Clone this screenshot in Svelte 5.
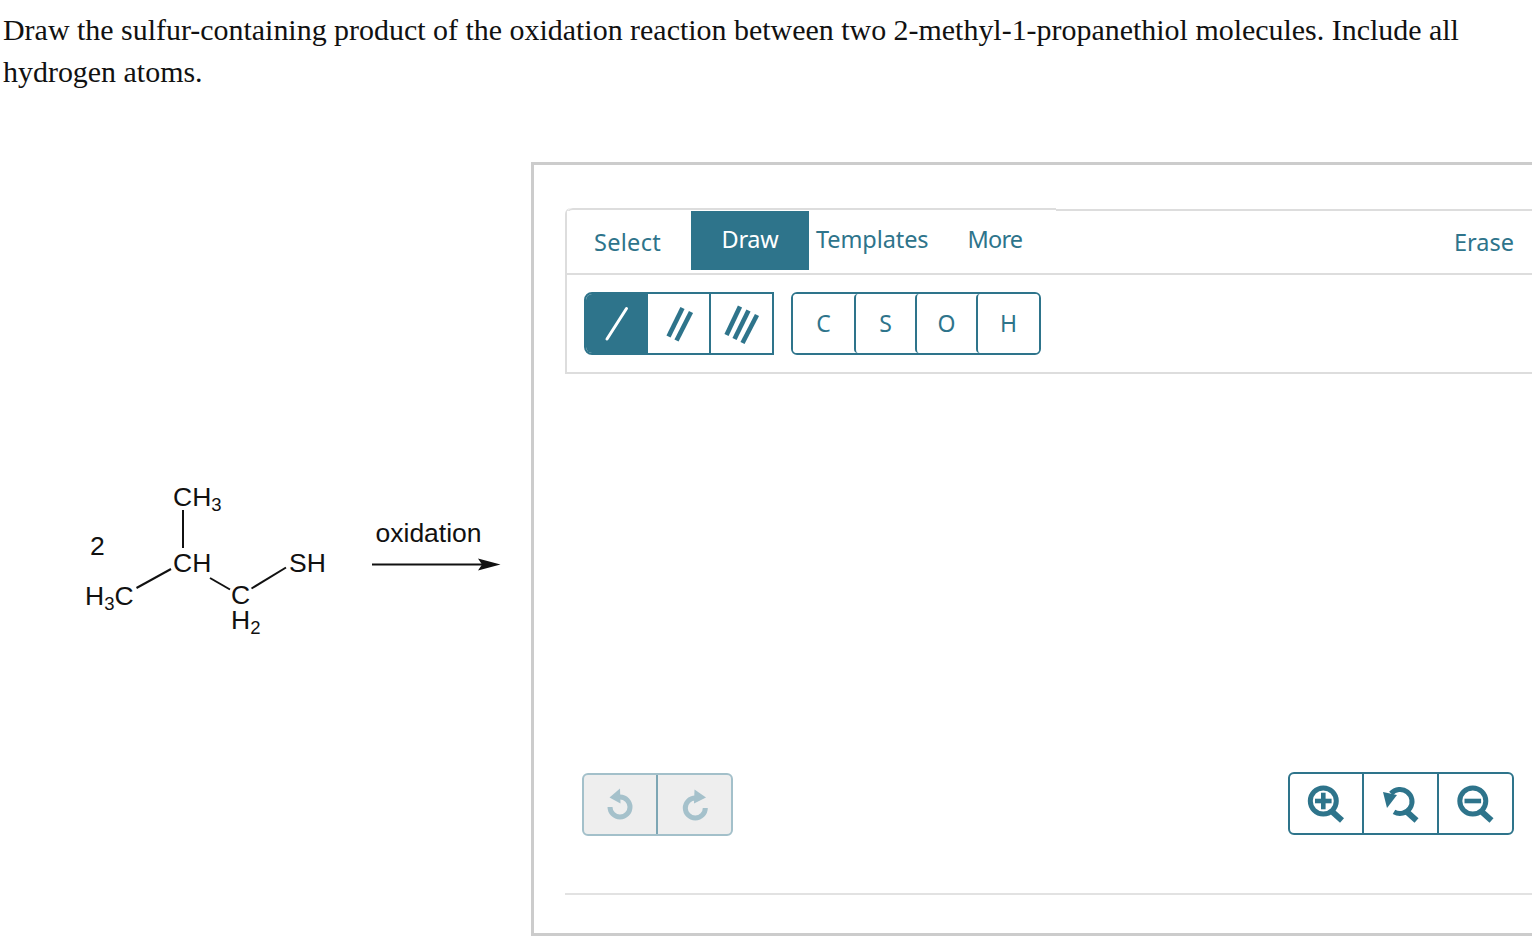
<script lang="ts">
  const bonds = ['single', 'double', 'triple']
  const atoms = ['C', 'S', 'O', 'H']
</script>

<main class="page">
  <p class="question">Draw the sulfur-containing product of the oxidation reaction between two 2-methyl-1-propanethiol molecules. Include all hydrogen atoms.</p>

  <div class="row">
    <svg class="reaction" viewBox="0 162 531 774" width="531" height="774">
      <g class="lines">
        <line x1="183" y1="510" x2="183" y2="548" />
        <line x1="136.5" y1="588" x2="171" y2="569" />
        <line x1="210" y1="578" x2="230" y2="589.5" />
        <line x1="251.5" y1="588.5" x2="286" y2="567.5" />
        <line x1="372" y1="564.5" x2="484" y2="564.5" />
      </g>
      <polygon points="478,558.5 500.5,564.5 478,570.5 482,564.5" />
      <text x="173" y="505.5">CH<tspan class="sub" dy="5">3</tspan></text>
      <text x="90" y="555">2</text>
      <text x="173" y="572">CH</text>
      <text x="85" y="605">H<tspan class="sub" dy="5">3</tspan><tspan dy="-5">C</tspan></text>
      <text x="289" y="572">SH</text>
      <text x="231" y="604">C</text>
      <text x="231" y="629">H<tspan class="sub" dy="5">2</tspan></text>
      <text x="375.5" y="541.5">oxidation</text>
    </svg>

    <section class="panel">
      <div class="editor">
        <div class="head">
          <div class="tabs">
            <div class="tab-main">
              <button class="tab select">Select</button>
              <button class="tab draw">Draw</button>
              <button class="tab templates">Templates</button>
              <button class="tab more">More</button>
            </div>
            <div class="tab-side">
              <button class="tab erase">Erase</button>
            </div>
          </div>

          <div class="toolbar">
            <div class="group bonds">
              {#each bonds as bond, i}
                <button class="cell" class:active={i === 0} aria-label={bond}>
                  <svg viewBox="0 0 40 44" width="40" height="44">
                    {#if i === 0}
                      <line class="bond-thin" x1="29.5" y1="6.5" x2="10" y2="37" />
                    {:else if i === 1}
                      <line class="bond" x1="23.5" y1="6" x2="9.5" y2="34.5" />
                      <line class="bond" x1="32" y1="10" x2="17.5" y2="38.5" />
                    {:else}
                      <line class="bond" x1="18" y1="4.5" x2="4.5" y2="33" />
                      <line class="bond" x1="26.5" y1="8.5" x2="12.5" y2="37" />
                      <line class="bond" x1="35" y1="13" x2="20.5" y2="41" />
                    {/if}
                  </svg>
                </button>
              {/each}
            </div>
            <div class="group atoms">
              {#each atoms as atom}
                <button class="cell atom">{atom}</button>
              {/each}
            </div>
          </div>
        </div>

        <div class="canvas">
          <div class="group history">
            <button class="cell" aria-label="undo">
              <svg viewBox="0 0 32 36" width="32" height="36">
                <path class="arc" d="M16 10 A10 10 0 1 1 6 20" />
                <polygon points="16,1.5 5.5,10.5 16.5,16.5" />
              </svg>
            </button>
            <button class="cell" aria-label="redo">
              <svg viewBox="0 0 32 36" width="32" height="36">
                <path class="arc" d="M16.3 11 A10 10 0 1 0 26.3 21" />
                <polygon points="27,10.5 15.5,2.5 15,16.5" />
              </svg>
            </button>
          </div>
          <div class="group zoom">
            <button class="cell" aria-label="zoom in">
              <svg viewBox="0 0 40 40" width="40" height="40">
                <circle class="arc" cx="17.3" cy="17" r="13" />
                <line class="handle" x1="26" y1="27.5" x2="36" y2="36.5" />
                <line class="mark" x1="9" y1="17" x2="25.6" y2="17" />
                <line class="mark" x1="17.3" y1="8.7" x2="17.3" y2="25.3" />
              </svg>
            </button>
            <button class="cell" aria-label="reset zoom">
              <svg viewBox="0 0 40 40" width="40" height="40">
                <path class="arc" d="M10 9.5 A12 12 0 1 1 13 27.8" />
                <line class="handle" x1="25.5" y1="27.5" x2="35.5" y2="36.5" />
                <polygon points="2,8 16,11 6,24" />
              </svg>
            </button>
            <button class="cell" aria-label="zoom out">
              <svg viewBox="0 0 40 40" width="40" height="40">
                <circle class="arc" cx="16.8" cy="17" r="13" />
                <line class="handle" x1="25.5" y1="27.5" x2="35.5" y2="36.5" />
                <line class="mark" x1="8.5" y1="17" x2="25.1" y2="17" />
              </svg>
            </button>
          </div>
        </div>
      </div>
      <div class="footer-rule"></div>
    </section>
  </div>
</main>

<style>
  :global(body) { overflow: hidden; background: #fff; }
  .page { width: 1532px; height: 952px; overflow: hidden; }
  .question { margin: 0; padding: 9px 0 0 3px; width: 1480px; font: 29.95px/42px "Liberation Serif", serif; color: #111; }
  .row { display: flex; align-items: flex-start; margin-top: 69px; }
  .reaction { flex: none; display: block; }
  .reaction text { font: 26.5px "Liberation Sans", Arial, sans-serif; fill: #111; }
  .reaction .sub { font-size: 18.5px; }
  .lines line { stroke: #111; stroke-width: 2; }
  .reaction polygon { fill: #111; }

  .panel { flex: none; width: 1020px; height: 774px; box-sizing: border-box; border: 3px solid #ccc; padding-top: 43px; padding-left: 31px; display: flex; flex-direction: column; }
  .editor { height: 685px; display: flex; flex-direction: column; }
  .head { border-left: 2px solid #ddd; border-top-left-radius: 6px; }
  .tabs { display: flex; align-items: flex-start; height: 67px; box-sizing: border-box; border-bottom: 2px solid #ddd; }
  .tab-main { display: flex; align-items: flex-start; width: 489px; height: 65px; box-sizing: border-box; border-top: 2px solid #ddd; border-top-left-radius: 6px; padding-top: 1px; }
  .tab-side { flex: 1; display: flex; justify-content: flex-end; padding-right: 34px; margin-top: 1px; border-top: 2px solid #ddd; }
  button { font-family: "Noto Sans", sans-serif; color: #2e748b; background: #fff; border: 0; padding: 0; margin: 0; }
  .tab { font-size: 23.5px; height: 59px; padding-bottom: 3px; letter-spacing: -0.1px; }
  .select { width: 124px; text-align: left; padding: 2px 0 0 27px; box-sizing: border-box; letter-spacing: 0.3px; }
  .draw { width: 118px; background: #2e748b; color: #fff; letter-spacing: -0.3px; }
  .templates { margin-left: 7px; }
  .more { margin-left: 39px; letter-spacing: -0.8px; }
  .erase { padding: 2px 0 0; height: 60px; letter-spacing: 0; }

  .toolbar { display: flex; gap: 17px; height: 99px; box-sizing: border-box; padding: 17px 0 0 17px; border-bottom: 2px solid #ddd; }
  .group { display: flex; box-sizing: border-box; border: 2px solid #2e748b; border-radius: 6px; height: 63px; }
  .cell { display: flex; align-items: center; justify-content: center; box-sizing: border-box; height: 100%; border-left: 2px solid #2e748b; }
  .cell:first-child { border-left: 0; }
  .bonds { width: 190px; border-radius: 8px 0 0 8px; }
  .bonds .cell:nth-child(1) { width: 62px; background: #2e748b; border-radius: 6px 0 0 6px; }
  .bonds .cell:nth-child(2) { width: 61px; border-left: 0; }
  .bonds .cell:nth-child(3) { width: 63px; }
  .atoms { width: 250px; }
  .atom { width: 61px; font-size: 23px; padding-bottom: 2px; border-radius: 4px; }
  .atom:first-child { width: 61px; }
  .atom:last-child { width: 63px; }
  .bond { stroke: #2e748b; stroke-width: 4.6; }
  .bond-thin { stroke: #fff; stroke-width: 3; stroke-linecap: round; }

  .canvas { flex: 1; display: flex; justify-content: space-between; align-items: flex-end; padding: 0 34px 57px 17px; }
  .history { width: 151px; background: #eee; border-color: #a3c0ca; }
  .history .cell { width: 75px; background: none; border-left-color: #7da6b4; }
  .history .cell:first-child { width: 72px; }
  .history .arc { fill: none; stroke: #a5c1cb; stroke-width: 5; }
  .history polygon { fill: #a5c1cb; }
  .zoom { width: 226px; margin-bottom: 1px; }
  .zoom .cell { width: 75px; background: none; }
  .zoom .cell:first-child { width: 72px; }
  .zoom .arc { fill: none; stroke: #2e748b; stroke-width: 5; }
  .zoom polygon { fill: #2e748b; }
  .handle { stroke: #2e748b; stroke-width: 6; }
  .mark { stroke: #2e748b; stroke-width: 4.6; }
  .footer-rule { height: 2px; background: #e2e2e2; }
</style>
